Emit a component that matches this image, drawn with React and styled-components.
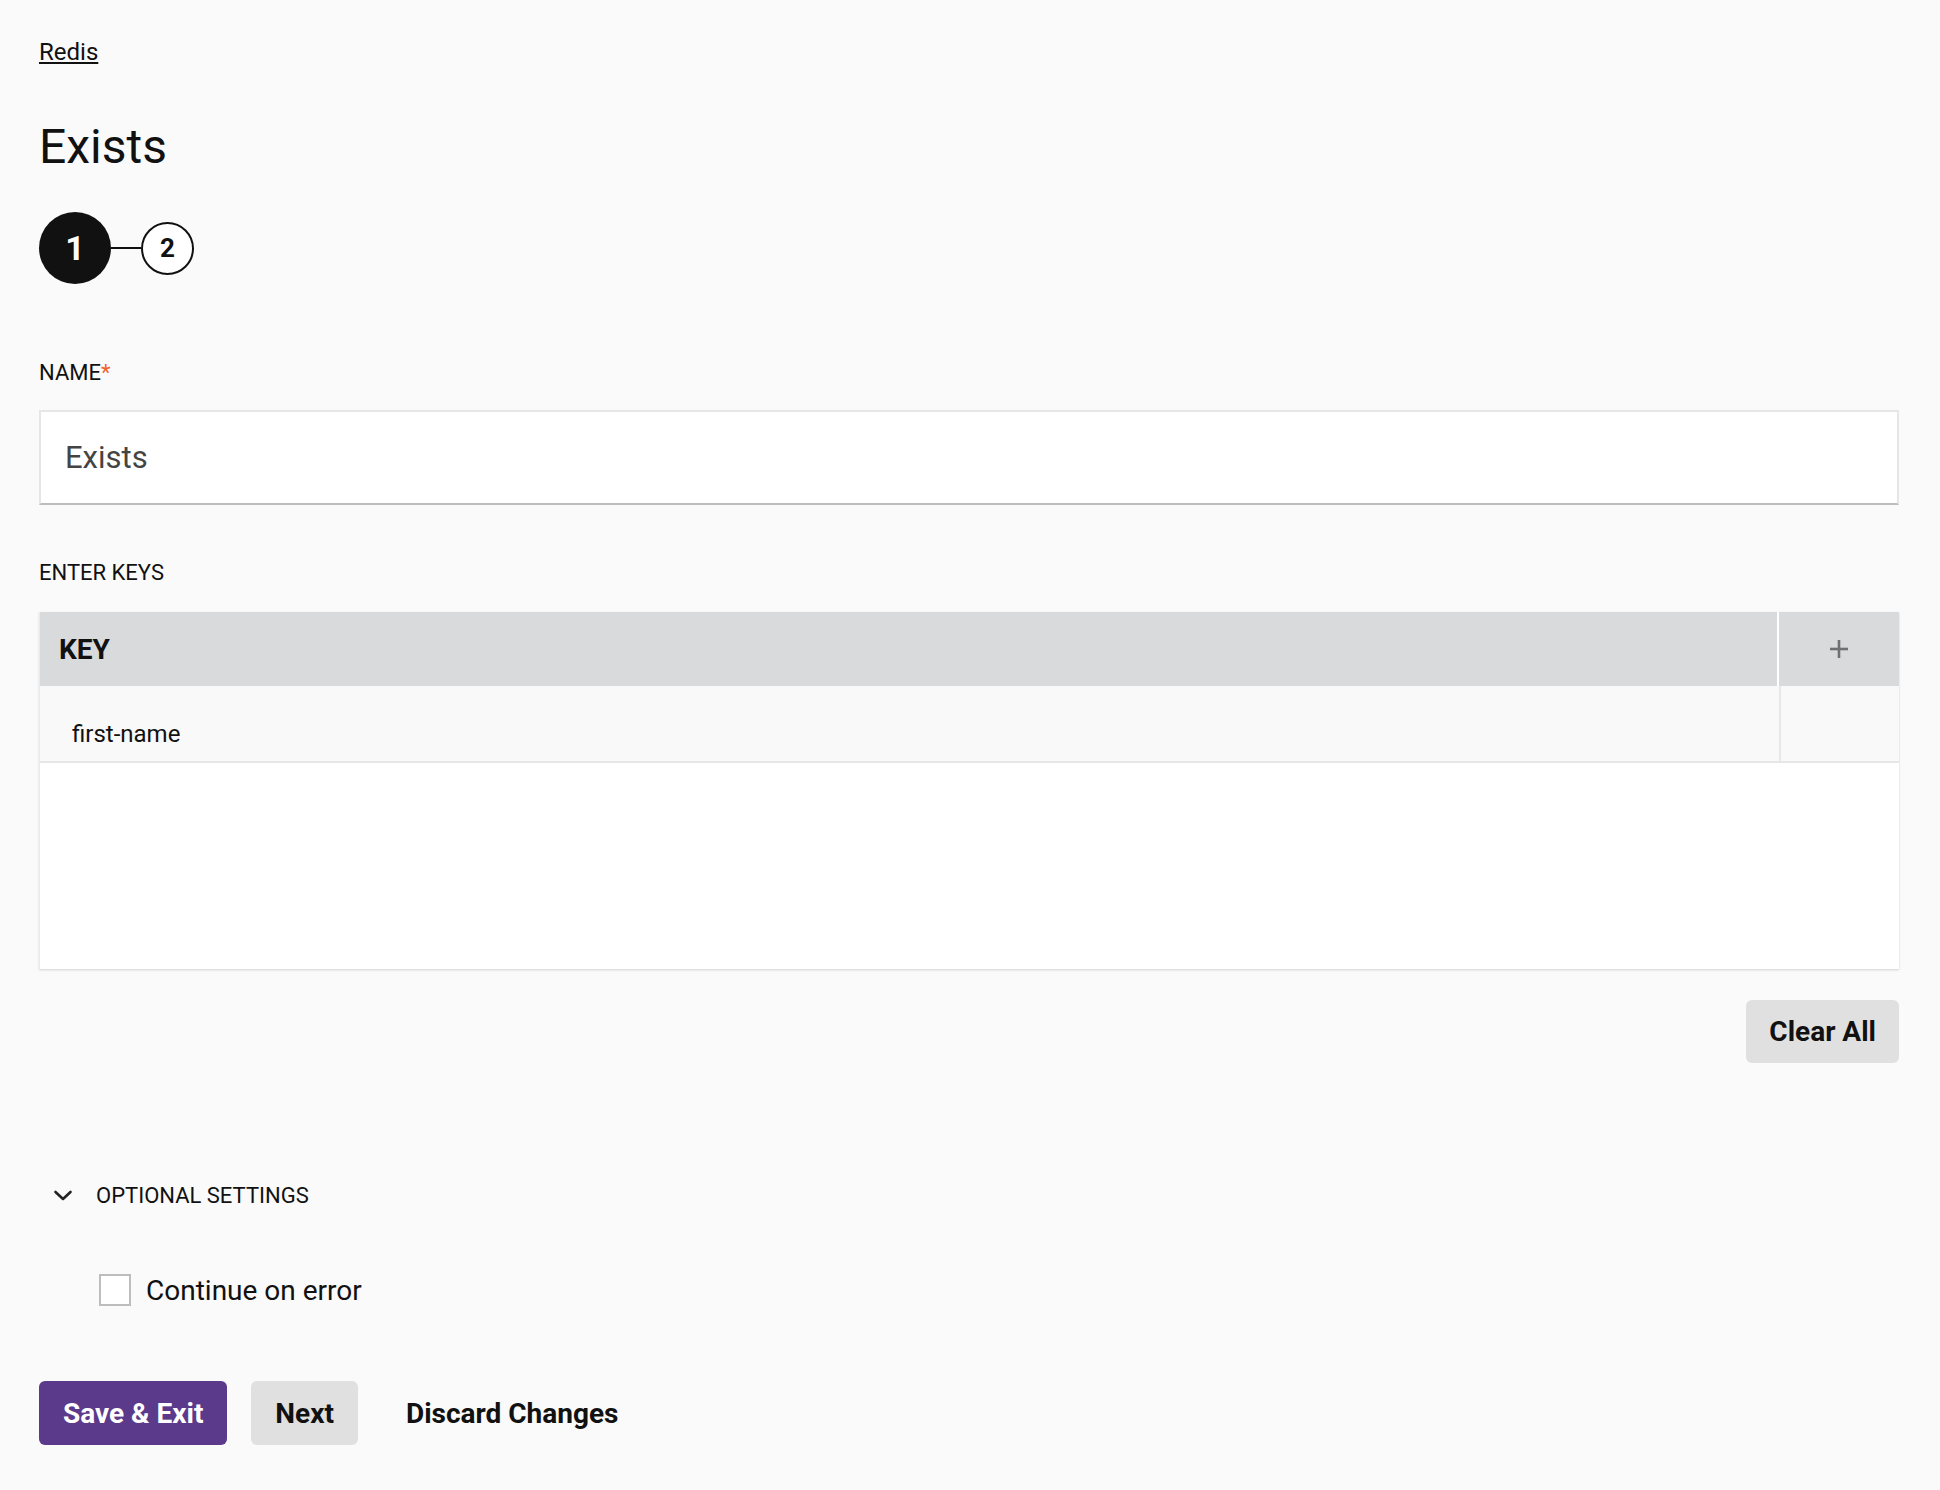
import React from "react";
import styled, { createGlobalStyle } from "styled-components";

const GlobalStyle = createGlobalStyle`
  html, body {
    margin: 0;
    padding: 0;
    background: #fafafa;
  }
  body {
    font-family: Roboto, "Liberation Sans", Arial, sans-serif;
    color: #111;
  }
  * { box-sizing: border-box; }
`;

const Page = styled.div`
  padding: 38px 41px 40px 39px;
  min-height: 1490px;
`;

const Crumb = styled.a`
  display: inline-block;
  font-size: 24px;
  line-height: 28px;
  color: #111;
  text-decoration: underline;
  text-underline-offset: 2px;
  cursor: pointer;
`;

const Title = styled.h1`
  margin: 53px 0 0;
  font-size: 48px;
  line-height: 56px;
  font-weight: 400;
  color: #111;
`;

const Stepper = styled.div`
  display: flex;
  align-items: center;
  margin-top: 37px;
  height: 72px;
`;

const Step = styled.div`
  display: flex;
  align-items: center;
  justify-content: center;
  border-radius: 50%;
  font-weight: 700;
  width: ${(p) => (p.$active ? "72px" : "53px")};
  height: ${(p) => (p.$active ? "72px" : "53px")};
  font-size: ${(p) => (p.$active ? "34px" : "26px")};
  background: ${(p) => (p.$active ? "#111" : "#fff")};
  color: ${(p) => (p.$active ? "#fff" : "#111")};
  border: ${(p) => (p.$active ? "none" : "2px solid #111")};
`;

const StepLine = styled.div`
  width: 30px;
  height: 2px;
  background: #111;
`;

const Label = styled.div`
  font-size: 22px;
  line-height: 26px;
  color: #111;
  margin-top: ${(p) => p.$top || 0}px;
`;

const Star = styled.span`
  color: #f2622a;
`;

const TextInput = styled.input`
  display: block;
  width: 100%;
  height: 95px;
  margin-top: 24px;
  padding: 0 24px;
  background: #fff;
  border: 2px solid #e6e6e6;
  border-bottom-color: #bdbdbd;
  font-family: Roboto, "Liberation Sans", Arial, sans-serif;
  font-size: 31px;
  color: #444;
  outline: none;
`;

const Table = styled.div`
  margin-top: 26px;
  height: 357px;
  background: #fff;
  box-shadow: 0 1px 2px rgba(0, 0, 0, 0.16);
  border-left: 1px solid #ececec;
`;

const HeadRow = styled.div`
  display: grid;
  grid-template-columns: 1fr 120px;
  column-gap: 2px;
  height: 74px;
  background: #fff;
`;

const HeadCell = styled.div`
  display: flex;
  align-items: center;
  justify-content: ${(p) => (p.$center ? "center" : "flex-start")};
  padding-left: ${(p) => (p.$center ? 0 : 19)}px;
  background: #d9dadc;
  font-size: 28px;
  font-weight: 700;
  color: #111;
`;

const BodyRow = styled.div`
  display: grid;
  grid-template-columns: 1fr 120px;
  height: 77px;
  background: #f9f9f9;
  border-bottom: 2px solid #e6e6e6;
`;

const BodyCell = styled.div`
  display: flex;
  align-items: center;
  padding-left: 32px;
  padding-top: 20px;
  font-size: 24px;
  color: #111;
  border-left: ${(p) => (p.$divider ? "2px solid #e8e8e8" : "none")};
`;

const Actions = styled.div`
  display: flex;
  justify-content: ${(p) => (p.$end ? "flex-end" : "flex-start")};
  gap: 24px;
  margin-top: ${(p) => p.$top || 0}px;
`;

const Button = styled.button`
  height: 64px;
  padding: 0 24px;
  border: none;
  border-radius: 6px;
  font-family: Roboto, "Liberation Sans", Arial, sans-serif;
  font-size: 28px;
  font-weight: 700;
  cursor: pointer;
  background: ${(p) =>
    p.$variant === "primary" ? "#5c3a8b" : p.$variant === "ghost" ? "transparent" : "#e0e0e0"};
  color: ${(p) => (p.$variant === "primary" ? "#fff" : "#111")};
`;

const ClearButton = styled(Button)`
  height: 63px;
  padding: 0 23px;
`;

const Optional = styled.div`
  display: flex;
  align-items: center;
  gap: 21px;
  margin-top: 120px;
  padding-left: 12px;
  font-size: 22px;
  line-height: 26px;
  color: #111;
  cursor: pointer;
`;

const CheckRow = styled.label`
  display: flex;
  align-items: center;
  gap: 15px;
  margin-top: 65px;
  padding-left: 60px;
  font-size: 28px;
  line-height: 34px;
  color: #111;
`;

const Box = styled.span`
  display: inline-block;
  width: 32px;
  height: 32px;
  margin-top: -3px;
  background: #fff;
  border: 2px solid #bdbdbd;
`;

const Chevron = () => (
  <svg width="24" height="24" viewBox="0 0 24 24" fill="none">
    <polyline points="4.5,8 12,15 19.5,8" stroke="#222" strokeWidth="2.6" strokeLinecap="round" strokeLinejoin="round" />
  </svg>
);

const Plus = () => (
  <svg width="20" height="20" viewBox="0 0 20 20">
    <line x1="10" y1="1" x2="10" y2="19" stroke="#707070" strokeWidth="2.6" />
    <line x1="1" y1="10" x2="19" y2="10" stroke="#707070" strokeWidth="2.6" />
  </svg>
);

export default function App() {
  return (
    <Page>
      <GlobalStyle />
      <Crumb>Redis</Crumb>
      <Title>Exists</Title>
      <Stepper>
        <Step $active>1</Step>
        <StepLine />
        <Step>2</Step>
      </Stepper>

      <Label $top={76}>
        NAME<Star>*</Star>
      </Label>
      <TextInput defaultValue="Exists" />

      <Label $top={55}>ENTER KEYS</Label>
      <Table>
        <HeadRow>
          <HeadCell>KEY</HeadCell>
          <HeadCell $center>
            <Plus />
          </HeadCell>
        </HeadRow>
        <BodyRow>
          <BodyCell>first-name</BodyCell>
          <BodyCell $divider />
        </BodyRow>
      </Table>

      <Actions $end $top={31}>
        <ClearButton>Clear All</ClearButton>
      </Actions>

      <Optional>
        <Chevron />
        OPTIONAL SETTINGS
      </Optional>

      <CheckRow>
        <Box />
        Continue on error
      </CheckRow>

      <Actions $top={73}>
        <Button $variant="primary">Save &amp; Exit</Button>
        <Button>Next</Button>
        <Button $variant="ghost">Discard Changes</Button>
      </Actions>
    </Page>
  );
}
